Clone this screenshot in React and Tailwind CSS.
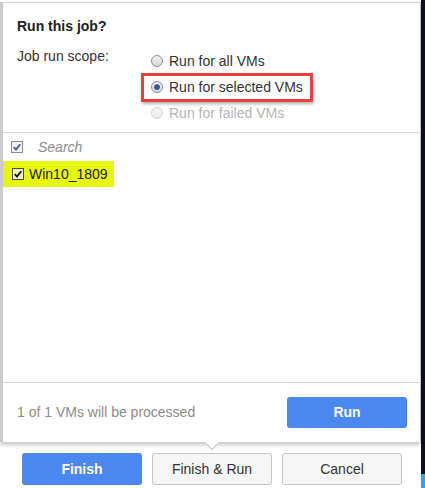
import React from "react";

function Radio({ checked, disabled }) {
  const stroke = disabled ? "#d2d2d2" : "#8e8e8e";
  return (
    <svg width="12" height="12" viewBox="0 0 12 12" className="shrink-0">
      <defs>
        <linearGradient id={disabled ? "rgd" : "rg"} x1="0" y1="0" x2="0" y2="1">
          <stop offset="0" stopColor={disabled ? "#f7f7f7" : "#f2f2f2"} />
          <stop offset="1" stopColor={disabled ? "#ececec" : "#d6d6d6"} />
        </linearGradient>
      </defs>
      <circle cx="6" cy="6" r="5.5" fill={`url(#${disabled ? "rgd" : "rg"})`} stroke={stroke} />
      {checked && <circle cx="6" cy="6" r="2.6" fill="#2c5cb5" stroke="#1b3f86" strokeWidth="0.6" />}
    </svg>
  );
}

function Check({ color = "#3b5aa8", bg = "#f4f4f4", border = "#8a8a8a" }) {
  return (
    <svg width="12" height="12" viewBox="0 0 12 12" className="shrink-0">
      <rect x="0.5" y="0.5" width="11" height="11" fill={bg} stroke={border} />
      <path d="M2.8 6.2 L5 8.6 L9.2 3.2" fill="none" stroke={color} strokeWidth="1.8" />
    </svg>
  );
}

export default function App() {
  return (
    <div className="w-[425px] h-[488px] flex bg-white overflow-hidden font-['Liberation_Sans',Arial,sans-serif] text-[14px] text-[#333]">
      <div className="w-[421px] flex flex-col">
        <div className="pt-[2px]">
          {/* popup panel */}
          <div className="relative h-[440px] flex flex-col bg-white border-t border-t-[#d6d6d6] border-l-[3px] border-l-[#cbcbcb] border-r border-r-[#c4c4c4] shadow-[0_3px_4px_rgba(0,0,0,0.22)]">
            <div className="pl-[14px] pt-[13px] pb-[6px] border-b border-[#d6d6d6]">
              <div className="h-[20px] leading-[20px] font-bold text-[#222]">Run this job?</div>
              <div className="mt-[12px] flex">
                <div className="w-[134px] leading-[17px]">Job run scope:</div>
                <div className="flex flex-col">
                  <div className="h-[26px] flex items-center gap-[6px]">
                    <Radio />
                    <span>Run for all VMs</span>
                  </div>
                  <div className="relative h-[26px] flex items-center gap-[6px]">
                    <Radio checked />
                    <span>Run for selected VMs</span>
                    <div className="absolute left-[-10px] top-[-1px] w-[172px] h-[29px] border-[3px] border-[#e8403f] shadow-[1px_2px_3px_rgba(0,0,0,0.3)]" />
                  </div>
                  <div className="h-[26px] flex items-center gap-[6px] text-[#b4b4b4]">
                    <Radio disabled />
                    <span>Run for failed VMs</span>
                  </div>
                </div>
              </div>
            </div>

            <div className="h-[28px] flex items-center pl-[8px] gap-[15px]">
              <Check />
              <span className="italic text-[#8a8a8a]">Search</span>
            </div>

            <div className="flex-1">
              <div className="inline-flex h-[26px] items-center gap-[5px] pl-[9px] pr-[6px] bg-[#e6f70b] text-[#222]">
                <Check color="#111" bg="#eaf6b8" border="#4a4a4a" />
                <span>Win10_1809</span>
              </div>
            </div>

            <div className="h-[60px] border-t border-[#d6d6d6] flex items-center justify-between pl-[14px] pr-[13px]">
              <span className="text-[#8c8c8c]">1 of 1 VMs will be processed</span>
              <button className="w-[120px] h-[31px] rounded-[3px] bg-[#4a87ef] text-white font-bold">Run</button>
            </div>

            {/* pointer */}
            <div className="absolute left-[204px] bottom-[-6px] w-[10px] h-[10px] rotate-45 bg-white border-r border-b border-[#c4c4c4]" />
          </div>
        </div>

        <div className="mt-[11px] flex gap-[10px] pl-[22px]">
          <button className="w-[120px] h-[32px] rounded-[3px] bg-[#4a87ef] text-white font-bold">Finish</button>
          <button className="w-[120px] h-[32px] rounded-[3px] border border-[#c6c6c6] bg-[#f6f6f6] text-[#333]">Finish &amp; Run</button>
          <button className="w-[120px] h-[32px] rounded-[3px] border border-[#c6c6c6] bg-[#f6f6f6] text-[#333]">Cancel</button>
        </div>
      </div>
      <div className="w-[4px] flex flex-col bg-[#0b1120]">
        <div className="flex-1" />
        <div className="h-[14px] bg-[#3a9ee0]" />
      </div>
    </div>
  );
}
